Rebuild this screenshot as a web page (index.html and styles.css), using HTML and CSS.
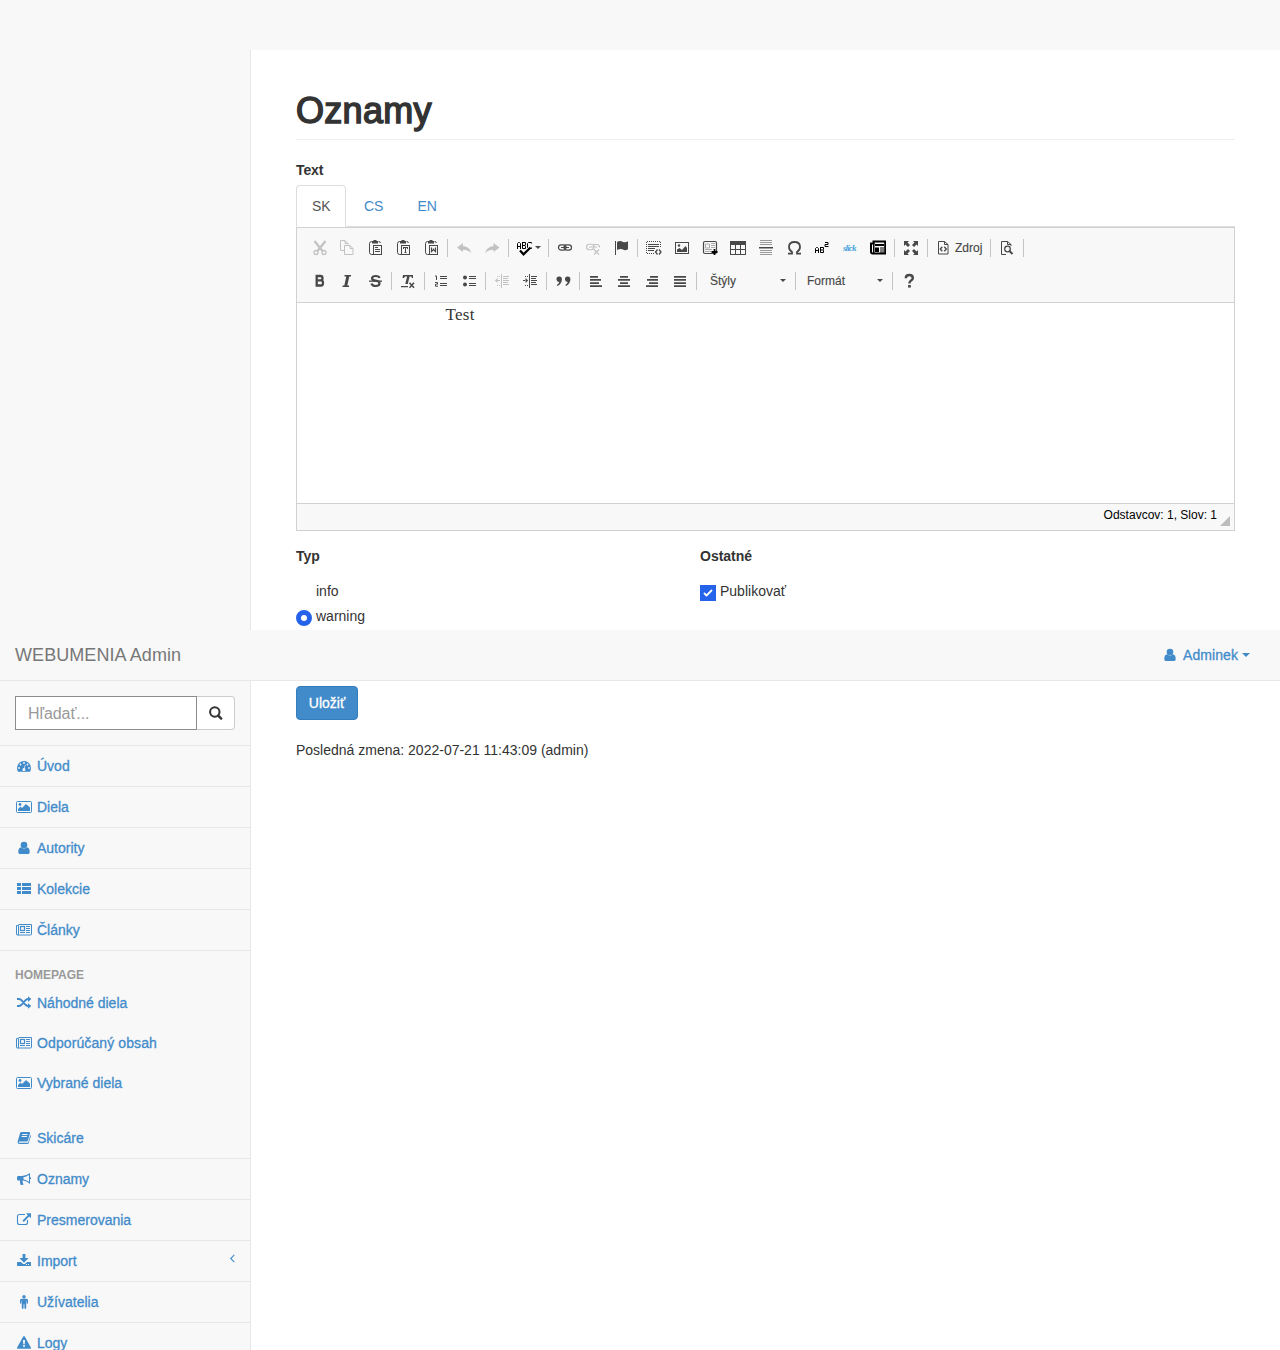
FILE: index.html
```html
<!DOCTYPE html>
<html lang="sk">
<head>
<meta charset="utf-8">
<title>WEBUMENIA Admin</title>
<link rel="stylesheet" href="styles.css">
</head>
<body>
<svg class="defs" width="0" height="0">
  <symbol id="i-image" viewBox="0 0 18 16"><rect x="1.500" y="2.500" width="15" height="11" rx="1" fill="none" stroke="currentColor"/><circle cx="5" cy="5.500" r="1.400"/><path d="M3 12V10L5.500 7.500 7 9l4-4 4 3.500V12z"/></symbol>
  <symbol id="i-user" viewBox="0 0 18 16"><circle cx="9" cy="5" r="3.300"/><path d="M6.300 7.200C4 7.300 3.300 9.500 3.300 11.900c0 1.300.8 2.100 2 2.100h7.400c1.200 0 2-.8 2-2.100 0-2.400-.7-4.600-3-4.700a3.800 3.800 0 0 1-5.400 0z"/></symbol>
  <symbol id="i-news" viewBox="0 0 18 16"><path d="M3.500 2.500h13v9.600q0 .9-1 .9H2.500Q1.500 13 1.500 12V3.500h2V12q0 1-1 1" fill="none" stroke="currentColor"/><rect x="5.500" y="4.500" width="4" height="4" fill="none" stroke="currentColor" stroke-width="1.200"/><path d="M11 4h4v1h-4zM11 6h4v1h-4zM11 8h4v1h-4zM5 10h5v1H5zM11 10h4v1h-4z"/></symbol>
  <symbol id="t-paste" viewBox="0 0 16 16"><path d="M4 1.500H3.700Q1.500 1.500 1.500 3.700v8.600Q1.500 14.500 3.700 14.500H5M10.500 1.500q1.900 0 1.900 1.500" fill="none" stroke="currentColor"/><path d="M4 1h1.500V0h3v1H10v2.500H4z"/><rect x="5.500" y="5.500" width="8" height="9" fill="none" stroke="currentColor"/></symbol>
</svg>

<div class="wrapper">
  <header class="navbar">
    <a class="brand">WEBUMENIA Admin</a>
    <a class="account"><svg class="fa" viewBox="0 0 18 16"><use href="#i-user"/></svg><span>Adminek</span><i class="caret"></i></a>
  </header>

  <aside class="sidebar">
    <div class="search">
      <input type="text" placeholder="Hľadať...">
      <button><svg width="16" height="16" viewBox="0 0 16 16"><circle cx="6.800" cy="7" r="4.700" fill="none" stroke="#333" stroke-width="2"/><path d="M10.200 10.600L13.200 13.600" stroke="#333" stroke-width="2.400" stroke-linecap="round"/></svg></button>
    </div>
    <nav class="menu">
      <a><svg class="fa" viewBox="0 0 18 16"><path fill-rule="evenodd" d="M9 3a7 7 0 0 0-7 7c0 1.400.4 2.600 1 3.700h12c.6-1.100 1-2.300 1-3.700a7 7 0 0 0-7-7zM9 4.100a.9.9 0 1 1 0 1.800.9.9 0 0 1 0-1.800zM5.500 5.600a.9.9 0 1 1 0 1.800.9.9 0 0 1 0-1.800zM12.500 5.600a.9.9 0 1 1 0 1.800.9.9 0 0 1 0-1.800zM4 9.100a.9.9 0 1 1 0 1.800.9.9 0 0 1 0-1.800zM14 9.100a.9.9 0 1 1 0 1.800.9.9 0 0 1 0-1.800zM10 6.800l.6.200-.9 3.300a1.500 1.500 0 1 1-.6-.2z"/></svg>Úvod</a>
      <a><svg class="fa"><use href="#i-image"/></svg>Diela</a>
      <a><svg class="fa"><use href="#i-user"/></svg>Autority</a>
      <a><svg class="fa" viewBox="0 0 18 16"><path d="M2 2h4v3H2zM7 2h9v3H7zM2 6h4v3H2zM7 6h9v3H7zM2 10h4v3H2zM7 10h9v3H7z"/></svg>Kolekcie</a>
      <a><svg class="fa"><use href="#i-news"/></svg>Články</a>
    </nav>
    <h2 class="section">Homepage</h2>
    <nav class="submenu">
      <a><svg class="fa" viewBox="0 0 18 16"><path d="M2 4h2c4 0 5 7 9 7h.5M2 11h2c4 0 5-7 9-7h.5" fill="none" stroke="currentColor" stroke-width="1.800"/><path d="M13 1.300L16.300 4 13 6.900zM13 8.200l3.300 2.800L13 13.800z"/></svg>Náhodné diela</a>
      <a><svg class="fa"><use href="#i-news"/></svg><span class="wide">Odporúčaný obsah</span></a>
      <a><svg class="fa"><use href="#i-image"/></svg>Vybrané diela</a>
    </nav>
    <nav class="menu">
      <a><svg class="fa" viewBox="0 0 18 16"><path fill-rule="evenodd" d="M6.600 2h7.700q1 0 .8 1l-2.200 7.500q-.3 1-1.300 1H4.500q-.8 0-.7.700.1.600.9.600h7.700q.6 0 .8-.6l2.200-7.300q.8.400.5 1.300l-2.200 7q-.4.800-1.300.8H4.500Q2.500 14 2.600 11.800L5 3.200Q5.400 2 6.600 2zM7.400 4l-.3 1h5.300l.3-1zM6.800 6l-.3 1h5.300l.3-1z"/></svg>Skicáre</a>
      <a><svg class="fa" viewBox="0 0 18 16"><path fill-rule="evenodd" d="M15 2v4q1 .2 1 1.200t-1 1.200V13q-3.200-3.100-7-3.500-1 .7-.2 1.800-.4.900.9 2-1 1.200-3 .6-1.200-3-.7-4.400H3.300Q2 9.500 2 8.300V6.400Q2 5 3.300 5H7q4.400 0 8-3zM14 4.100Q11.300 6 8.500 6.300v2.100q2.800.3 5.500 2.400z"/></svg>Oznamy</a>
      <a><svg class="fa" viewBox="0 0 18 16"><path d="M10 2.500H4.500Q2.500 2.500 2.500 4.500v6q0 2 2 2h6q2 0 2-2V8" fill="none" stroke="currentColor" stroke-width="1.100"/><path d="M11 1.300h5v5l-1.800-1.700-5.400 5.300-1.300-1.300 5.300-5.400z"/></svg>Presmerovania</a>
      <a><svg class="fa" viewBox="0 0 18 16"><path fill-rule="evenodd" d="M7.600 1h2.800v4h3.200L9 9.700 4.400 5h3.200zM2.500 9H6l1.500 1.400q1.500 1.300 3 0L12 9h3.500q.5 0 .5.700v2.600q0 .7-.6.700H2.600q-.6 0-.6-.7V9.700Q2 9 2.500 9zM11 11v1h1v-1zM13 11v1h1v-1z"/></svg>Import<svg class="chevron" width="6" height="9" viewBox="0 0 6 9"><path d="M5.300.8L1.700 4.500l3.600 3.700" fill="none" stroke="currentColor" stroke-width="1.100"/></svg></a>
      <a><svg class="fa" viewBox="0 0 18 16"><circle cx="9" cy="2.700" r="1.700"/><path d="M6.600 4.700h4.800Q13 4.800 13 6.300V9q0 .7-.7.700T11.600 9V6.800h-.4v7.300q0 .8-.9.800t-.9-.8V10.300h-.8v3.800q0 .8-.9.800t-.9-.8V6.800h-.4V9q0 .7-.7.700T5 9V6.300q0-1.500 1.600-1.600z"/></svg>Užívatelia</a>
      <a><svg class="fa" viewBox="0 0 18 16"><path fill-rule="evenodd" d="M8.200 1.500q.8-1 1.600 0l6.100 10.900q.4 1.200-.8 1.300H2.900q-1.200-.1-.8-1.300zM8 5l.3 4.200h1.400L10 5zM8.100 10v1.800h1.800V10z"/></svg>Logy</a>
    </nav>
  </aside>

  <main class="content">
    <h1>Oznamy</h1>
    <label class="label">Text</label>
    <div class="tabs"><a class="active">SK</a><a>CS</a><a>EN</a></div>

    <section class="editor">
      <div class="toolbar">
        <div class="row">
          <b class="btn off"><svg viewBox="0 0 16 16"><path d="M3.500 1l8 10M14.500 1l-8 10" stroke="currentColor" stroke-width="2.200" fill="none"/><circle cx="5" cy="12.500" r="2" fill="none" stroke="currentColor" stroke-width="1.300"/><circle cx="13" cy="12.500" r="2" fill="none" stroke="currentColor" stroke-width="1.300"/></svg></b>
          <b class="btn off"><svg viewBox="0 0 16 16"><path d="M5 10.500H1.500V.5H6l3 3V4.500M6 .5v3h3M5.500 5.500H11l3 3v6H5.500zM11 5.500v3h3" fill="none" stroke="currentColor"/></svg></b>
          <b class="btn"><svg viewBox="0 0 16 16"><g transform="translate(1)"><use href="#t-paste"/><path d="M7 7h3v1H7zM7 9h5v1H7zM7 11h5v1H7z"/></g></svg></b>
          <b class="btn"><svg viewBox="0 0 16 16"><g transform="translate(1)"><use href="#t-paste"/><path d="M7 7h5v2h-1V8h-1v4h.5v1h-2v-1H9V8H8v1H7z"/></g></svg></b>
          <b class="btn"><svg viewBox="0 0 16 16"><g transform="translate(1)"><use href="#t-paste"/><path d="M7.500 7.500v4l2-2 2 2v-4M9.500 8.500v2" fill="none" stroke="currentColor" stroke-width="1.200"/></g></svg></b>
          <i class="sep"></i>
          <b class="btn off"><svg viewBox="0 0 16 16"><path d="M1 7.500L7 3v3q7 .5 8.500 7.500Q12.500 9.700 7 9.800V12z"/></svg></b>
          <b class="btn off"><svg viewBox="0 0 16 16"><path d="M15.500 7.500L9.500 3v3Q2.500 6.500 1 13.500 4 9.700 9.500 9.800V12z"/></svg></b>
          <i class="sep"></i>
          <b class="btn menu-btn black"><svg viewBox="0 0 16 16"><path d="M.5 9V3.500l1-1h1l1 1V9M.5 6.500h3M5.500 2v6.500h3v-2L8 5.500H5.500M8 5.500l.5-1.500V2.500h-3M14.500 3.500v-1h-3l-1 1v4l1 1h3v-1" fill="none" stroke="currentColor"/><path d="M3 10.500l3.500 3.800L13.500 7.500" fill="none" stroke="currentColor" stroke-width="2.200"/></svg><i class="arrow"></i></b>
          <i class="sep"></i>
          <b class="btn"><svg viewBox="0 0 16 16"><rect x="1.500" y="4.800" width="7.500" height="5.400" rx="2.700" fill="none" stroke="currentColor" stroke-width="1.200"/><rect x="7" y="4.800" width="7.500" height="5.400" rx="2.700" fill="none" stroke="currentColor" stroke-width="1.200"/><path d="M4 7h8v1H4z"/></svg></b>
          <b class="btn off"><svg viewBox="0 0 16 16"><rect x="1.500" y="4.300" width="7.500" height="5.400" rx="2.700" fill="none" stroke="currentColor" stroke-width="1.100"/><path d="M8.500 4.500H12q2.500 0 2.500 3M4 7h8M9 9.500l5 5M14 9.500l-5 5" fill="none" stroke="currentColor" stroke-width="1.200"/></svg></b>
          <b class="btn"><svg viewBox="0 0 16 16"><path d="M2 1h1v14H2zM4 2q3-2 6 0 2.500 1 5-.7v8Q12 11 9.500 9.300 7 8.500 4 10z"/></svg></b>
          <i class="sep"></i>
          <b class="btn"><svg viewBox="0 0 16 16"><path d="M1 1.500h13.500M1 13.500h7M.5 2v12M14.500 2v6" fill="none" stroke="currentColor" stroke-dasharray="1 1"/><path d="M2 4h11v1H2zM2 6h11v1H2zM2 8h7v1H2zM2 10h6v1H2z"/><path d="M11.500 9.500L9.500 12l2 2.500M13 9.500l2 2.500-2 2.500" fill="none" stroke="currentColor" stroke-width="1.300"/></svg></b>
          <b class="btn"><svg viewBox="0 0 16 16"><rect x="1.500" y="2.500" width="13" height="11" fill="none" stroke="currentColor"/><circle cx="5" cy="5.500" r="1.200"/><path d="M3 12V9.500L5.500 8 8 10l3.500-4L13 8v4z"/></svg></b>
          <b class="btn"><svg viewBox="0 0 16 16"><rect x="1.500" y="1.500" width="13" height="12" rx="1.500" fill="#f8f8f8" stroke="currentColor" stroke-width="1.200"/><path d="M3.500 4h4v4h-4zM9 3.500h4M9 5.500h4M9 7.500h4M3 9.500h7M3 11.500h6" fill="none" stroke="#aaa"/><path d="M12.500 9v6M9.500 12h6" stroke="#000" stroke-width="1.800"/></svg></b>
          <b class="btn"><svg viewBox="0 0 16 16"><path fill-rule="evenodd" d="M0 1h16v14H0zM1 5v4h4V5zM6 5v4h4V5zM11 5v4h4V5zM1 10v4h4v-4zM6 10v4h4v-4zM11 10v4h4v-4z"/></svg></b>
          <b class="btn"><svg viewBox="0 0 16 16"><path d="M2 .5h12M2 2.500h12M2 4.500h12M2 10.500h12M2 12.500h12M2 14.500h12" stroke="#999" fill="none"/><path d="M1 7h14v1.500H1z"/></svg></b>
          <b class="btn"><svg viewBox="0 0 16 16"><path d="M2 13.700h4V12Q3 10 3 7q0-5 5.500-5T14 7q0 3-3 5v1.700h4" fill="none" stroke="currentColor" stroke-width="1.800"/></svg></b>
          <b class="btn black"><svg viewBox="0 0 16 16"><path d="M1.500 13V8.500l1-1h1l1 1V13M1.500 10.500h3M6.500 7v5.500h3v-2l-.5-.5H6.500M9 10l.5-.5v-2h-3M11 2.500h3v2h-3v2h3.500" fill="none" stroke="currentColor"/></svg></b>
          <b class="btn"><span class="slick">slick</span></b>
          <b class="btn black"><svg viewBox="0 0 16 16"><path d="M3.500 1.500h11.700v12H2.500q-1.500 0-1.500-2v-8h2.500z" fill="none" stroke="currentColor" stroke-width="2"/><path d="M5 4h9v2H5zM5 7.500h4V12H5zM10 7.500h4v1h-4zM10 9.500h4v1h-4zM10 11.500h4v1h-4zM3 2h1.500v12H3z"/></svg></b>
          <i class="sep"></i>
          <b class="btn"><svg viewBox="0 0 16 16"><path d="M1 1h5L4.500 2.500 7 5 5 7 2.500 4.500 1 6zM15 1v5l-1.500-1.500L11 7 9 5l2.500-2.500L10 1zM1 15v-5l1.500 1.500L5 9l2 2-2.500 2.500L6 15zM15 15h-5l1.500-1.500L9 11l2-2 2.500 2.500L15 10z"/></svg></b>
          <i class="sep"></i>
          <b class="btn source"><svg viewBox="0 0 16 16"><path d="M2.500 1.500h6l3.500 3v9.500H2.500zM8.500 1.500v3H12" fill="none" stroke="currentColor"/><path d="M6.300 6.800L4.300 9l2 2.200M8.300 6.800l2 2.200-2 2.200" fill="none" stroke="currentColor" stroke-width="1.300"/></svg><span>Zdroj</span></b>
          <i class="sep"></i>
          <b class="btn"><svg viewBox="0 0 16 16"><path d="M7 14.500H2.500v-13h6l3.500 3V6M8.500 1.500v3H12" fill="none" stroke="currentColor"/><circle cx="8.500" cy="9" r="2.800" fill="none" stroke="currentColor" stroke-width="1.300"/><path d="M10.500 11l3 3" stroke="currentColor" stroke-width="2"/></svg></b>
          <i class="sep"></i>
        </div>
        <div class="row">
          <b class="btn"><svg viewBox="0 0 16 16"><path d="M5.700 3h3.800q2 0 2 2.200t-2 2.200H5.700h4.300q2 0 2 2.600t-2 2.500H5.700z" fill="none" stroke="currentColor" stroke-width="2.300"/></svg></b>
          <b class="btn"><svg viewBox="0 0 16 16"><path d="M5.500 2h6.500v1.600h-1.700L8.300 12.400h1.700V14H3.500v-1.600h1.800l2-8.800H5.500z"/></svg></b>
          <b class="btn"><svg viewBox="0 0 16 16"><path d="M12.500 5Q12 3 8.700 3T5 5.200q0 2 3.700 2.500T12.500 10.300q0 2.700-3.700 2.700T4.500 10.500" fill="none" stroke="currentColor" stroke-width="2.200"/><path d="M2 7.500h13v1.300H2z"/></svg></b>
          <i class="sep"></i>
          <b class="btn"><svg viewBox="0 0 16 16"><path d="M3 2h10v3h-1.200l-.4-1.500H9.600L7.800 11H5.300l1.800-7.500H5L4 5H2.500zM1 13h7v1.200H1z"/><path d="M9.500 9.700l4.500 5M14 9.700l-4.500 5" stroke="currentColor" stroke-width="1.500"/></svg></b>
          <i class="sep"></i>
          <b class="btn"><svg viewBox="0 0 16 16"><path d="M7 3h7v1H7zM7 5h7v1H7zM7 10h7v1H7zM7 12h7v1H7z"/><path d="M2 3h1.500v4M2 9.500h2.500v1.700H2.500v2h2.500" fill="none" stroke="currentColor"/></svg></b>
          <b class="btn"><svg viewBox="0 0 16 16"><circle cx="4" cy="4.500" r="2"/><circle cx="4" cy="11.500" r="2"/><path d="M8 3h7v1H8zM8 5h7v1H8zM8 10h7v1H8zM8 12h7v1H8z"/></svg></b>
          <i class="sep"></i>
          <b class="btn off"><svg viewBox="0 0 16 16"><path d="M7 1h1v14H7zM9 3h6v1H9zM9 5h5v1H9zM9 7h6v1H9zM9 9h5v1H9zM9 11h6v1H9zM2.500 7H6v1H2.500zM3.500 5v5L.8 7.500zM3 3h1v1H3zM5 3h1v1H5zM3 12h1v1H3zM5 12h1v1H5z"/></svg></b>
          <b class="btn"><svg viewBox="0 0 16 16"><path d="M7 1h1v14H7zM9 3h6v1H9zM9 5h5v1H9zM9 7h6v1H9zM9 9h5v1H9zM9 11h6v1H9zM1 7h3v1H1zM3.500 5v5l2.700-2.500zM3 3h1v1H3zM5 3h1v1H5zM3 12h1v1H3zM5 12h1v1H5z"/></svg></b>
          <i class="sep"></i>
          <b class="btn"><svg viewBox="0 0 16 16"><path d="M4 3.500a2.700 2.700 0 0 1 2.900 2.700Q7 10.500 2.500 13l-.6-.9Q4 10.500 4.300 8.900A2.700 2.700 0 1 1 4 3.500zM12.500 3.500a2.700 2.700 0 0 1 2.900 2.700Q15.500 10.500 11 13l-.6-.9q2.100-1.600 2.400-3.200a2.700 2.700 0 1 1-.3-5.400z"/></svg></b>
          <i class="sep"></i>
          <b class="btn"><svg viewBox="0 0 16 16"><path d="M2 3h8v1.700H2zM2 6.100h11v1.700H2zM2 9.200h9v1.700H2zM2 12.300h12V14H2z"/></svg></b>
          <b class="btn"><svg viewBox="0 0 16 16"><path d="M4 3h8v1.700H4zM2 6.100h12v1.700H2zM4 9.200h8v1.700H4zM2 12.300h12V14H2z"/></svg></b>
          <b class="btn"><svg viewBox="0 0 16 16"><path d="M6 3h8v1.700H6zM3 6.100h11v1.700H3zM5 9.200h9v1.700H5zM2 12.300h12V14H2z"/></svg></b>
          <b class="btn"><svg viewBox="0 0 16 16"><path d="M2 3h12v1.700H2zM2 6.100h12v1.700H2zM2 9.200h12v1.700H2zM2 12.300h12V14H2z"/></svg></b>
          <i class="sep"></i>
          <b class="combo combo-styles"><span>Štýly</span><i class="arrow"></i></b>
          <i class="sep"></i>
          <b class="combo combo-format"><span>Formát</span><i class="arrow"></i></b>
          <i class="sep"></i>
          <b class="btn"><svg viewBox="0 0 16 16"><path d="M4.800 5.200q0-3.200 3.500-3.200t3.500 2.900q0 1.700-1.700 2.600T8.400 10.500" fill="none" stroke="currentColor" stroke-width="2.400"/><path d="M7.100 12h2.700v2.600H7.100z"/></svg></b>
        </div>
      </div>
      <div class="document">Test</div>
      <div class="status"><span>Odstavcov: 1, Slov: 1</span><i class="grip"></i></div>
    </section>

    <div class="options">
      <fieldset>
        <legend>Typ</legend>
        <label><i class="blank"></i>info</label>
        <label><i class="radio"></i>warning</label>
      </fieldset>
      <fieldset>
        <legend>Ostatné</legend>
        <label><i class="check"><svg width="16" height="16" viewBox="0 0 16 16"><path d="M4.500 8.500l2 2 5-5" fill="none" stroke="#fff" stroke-width="1.800" stroke-linecap="round" stroke-linejoin="round"/></svg></i>Publikovať</label>
      </fieldset>
    </div>
    <button class="save">Uložiť</button>
    <p class="changed">Posledná zmena: 2022-07-21 11:43:09 (admin)</p>
  </main>
</div>
</body>
</html>
```
FILE: styles.css
```css
* { box-sizing: border-box; }
body {
  margin: 0;
  background: #f8f8f8;
  color: #333;
  font: 14px/20px "Liberation Sans", Arial, sans-serif;
}
.defs { position: absolute; }
svg { fill: currentColor; }
a { color: #428bca; text-decoration: none; }

.wrapper {
  position: relative;
  display: grid;
  grid-template-columns: 250px 1fr;
  height: 1350px;
  padding-top: 50px;
  overflow: hidden;
}

/* Bar laid over the page */
.navbar {
  position: absolute;
  top: 630px;
  left: 0;
  right: 0;
  z-index: 2;
  display: flex;
  align-items: center;
  justify-content: space-between;
  height: 51px;
  padding: 0 30px 0 15px;
  background: #f8f8f8;
  border-bottom: 1px solid #e7e7e7;
}
.brand { color: #777; font-size: 18px; letter-spacing: .07px; }
.account { display: flex; align-items: center; }
.account span { margin: 0 4px; letter-spacing: .08px; }
.account, .menu, .submenu { -webkit-text-stroke: .3px; }
.caret { border: 4.500px solid transparent; border-top-color: currentColor; border-bottom: 0; }
.fa { width: 18px; height: 16px; flex: none; -webkit-text-stroke: 0; }

/* Sidebar */
.sidebar { padding-top: 631px; }
.search {
  display: flex;
  height: 65px;
  padding: 15px;
  border-bottom: 1px solid #e7e7e7;
}
.search input {
  width: 182px;
  height: 34px;
  padding: 1px 12px 0;
  border: 1px solid #8c8c8c;
  background: #fff;
  font: 16px "Liberation Sans", Arial, sans-serif;
  letter-spacing: -.1px;
}
.search input::placeholder { color: #999; }
.search button {
  width: 38px;
  height: 34px;
  padding: 0;
  display: flex;
  align-items: center;
  justify-content: center;
  border: 1px solid #ccc;
  border-left: 0;
  border-radius: 0 4px 4px 0;
  background: #fff;
}
.menu a, .submenu a {
  display: flex;
  align-items: center;
  gap: 4px;
  height: 40px;
  padding: 0 15px;
}
.menu a { height: 41px; border-bottom: 1px solid #e7e7e7; }
.submenu { margin-bottom: 15px; }
.wide { letter-spacing: .1px; }
.chevron { margin: 0 0 5px auto; }
.section {
  margin: 0;
  padding: 14px 15px 0;
  height: 32px;
  color: #999;
  font-size: 12px;
  line-height: 20px;
  text-transform: uppercase;
}

/* Page */
.content {
  padding: 0 45px;
  border-left: 1px solid #e7e7e7;
  background: #fff;
}
h1 {
  height: 90px;
  margin: 0 0 20px;
  padding-top: 41px;
  border-bottom: 1px solid #eee;
  font-size: 36px;
  line-height: 40px;
  font-weight: 400;
  letter-spacing: .3px;
  -webkit-text-stroke: 1.500px;
}
.label { display: block; height: 25px; font-weight: 700; letter-spacing: -.1px; }
.tabs { display: flex; gap: 2px; height: 42px; border-bottom: 1px solid #ddd; }
.tabs a { height: 42px; padding: 10px 15px; border: 1px solid transparent; }
.tabs .active {
  width: 50px;
  border-color: #ddd #ddd #fff;
  border-radius: 4px 4px 0 0;
  background: #fff;
  color: #555;
}

/* Rich text editor */
.editor { border: 1px solid #d1d1d1; height: 304px; }
.toolbar {
  height: 75px;
  padding: 3px 9px 0;
  border-bottom: 1px solid #d1d1d1;
  background: #f8f8f8;
  color: #484848;
}
.row { display: flex; align-items: center; height: 33px; font-size: 12px; }
.btn { display: flex; align-items: center; width: 28px; padding-left: 5px; font-weight: 400; }
.btn svg { width: 16px; height: 16px; flex: none; }
.off { color: #c2c2c2; }
.black { color: #000; }
.sep { width: 1px; height: 18px; margin: 0 3px 0 1px; background: #c4c4c4; }
.menu-btn { width: 35px; }
.arrow { border: 3px solid transparent; border-top-color: #484848; border-bottom: 0; }
.menu-btn .arrow { margin-left: 2px; }
.source, .combo { -webkit-text-stroke: .15px; }
.source { width: 58px; gap: 3px; }
.slick { color: #4ba3dc; margin-left: 1px; font: italic 700 9px "Liberation Serif", serif; letter-spacing: -.9px; }
.combo { display: flex; align-items: center; justify-content: space-between; font-weight: 400; }
.combo-styles { width: 94px; padding: 0 8px 0 10px; }
.combo-format { width: 92px; padding: 0 8px 0 8px; }
.document {
  height: 200px;
  padding: 2px 148.500px;
  font: 17px/20px "Liberation Serif", serif;
  letter-spacing: .3px;
}
.status {
  display: flex;
  justify-content: flex-end;
  height: 27px;
  padding: 1px 4px 0;
  border-top: 1px solid #d1d1d1;
  background: #f8f8f8;
  color: #000;
  font-size: 12px;
}
.grip {
  margin: 11px 0 0 3px;
  width: 0;
  height: 0;
  border-left: 10px solid transparent;
  border-bottom: 10px solid #bcbcbc;
}

/* Notice options */
.options { display: grid; grid-template-columns: 404px 1fr; height: 155px; padding-top: 15px; }
fieldset { margin: 0; padding: 0; border: 0; }
legend { padding: 0; margin-bottom: 13px; font-weight: 700; }
fieldset label { display: flex; gap: 4px; height: 25px; line-height: 24px; }
.blank, .radio, .check { width: 16px; height: 16px; margin-top: 6px; }
.radio { border: 5px solid #2563eb; border-radius: 50%; background: #fff; }
.check { background: #2563eb; }
.check svg { display: block; }
.save {
  display: block;
  width: 62px;
  height: 34px;
  padding: 0;
  border: 1px solid #357ebd;
  border-radius: 4px;
  background: #428bca;
  color: #fff;
  font: 14px "Liberation Sans", Arial, sans-serif;
  -webkit-text-stroke: .3px;
}
.changed { margin: 20px 0 0; }
```
